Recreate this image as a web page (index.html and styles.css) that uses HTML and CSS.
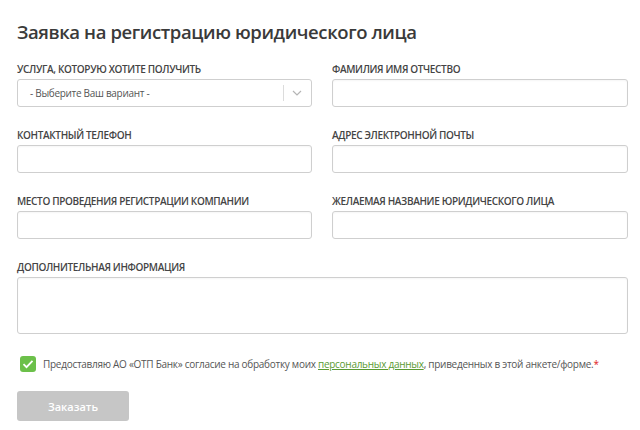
FILE: index.html
```html
<!DOCTYPE html>
<html lang="ru">
<head>
    <meta charset="UTF-8">
    <meta name="viewport" content="width=device-width, initial-scale=1.0">
    <title>Заявка на регистрацию юридического лица</title>
    <link rel="stylesheet" href="styles.css">
</head>
<body>
    <div class="page">
        <h1>Заявка на регистрацию юридического лица</h1>

        <form class="form">
            <div class="field">
                <label>Услуга, которую хотите получить</label>
                <div class="select">
                    <span class="select-text">- Выберите Ваш вариант -</span>
                    <span class="select-sep"></span>
                    <svg class="select-arrow" width="10" height="6" viewBox="0 0 10 6">
                        <path d="M1 1l4 4 4-4" fill="none" stroke="#b5b5b5" stroke-width="1.2"/>
                    </svg>
                </div>
            </div>
            <div class="field">
                <label>Фамилия имя отчество</label>
                <input class="input" type="text">
            </div>

            <div class="field">
                <label>Контактный телефон</label>
                <input class="input" type="text">
            </div>
            <div class="field">
                <label>Адрес электронной почты</label>
                <input class="input" type="text">
            </div>

            <div class="field">
                <label>Место проведения регистрации компании</label>
                <input class="input" type="text">
            </div>
            <div class="field">
                <label>Желаемая название юридического лица</label>
                <input class="input" type="text">
            </div>

            <div class="field wide">
                <label>Дополнительная информация</label>
                <textarea class="input area"></textarea>
            </div>
        </form>

        <div class="agree">
            <span class="check">
                <svg width="12" height="10" viewBox="0 0 12 10">
                    <path d="M1.5 5.2l3 3 6-6.4" fill="none" stroke="#fff" stroke-width="1.8"/>
                </svg>
            </span>
            <p>Предоставляю АО «ОТП Банк» согласие на обработку моих <a href="#">персональных данных</a>, приведенных в этой анкете/форме.<span class="req">*</span></p>
        </div>

        <button class="button" type="button">Заказать</button>
    </div>
</body>
</html>
```

FILE: styles.css
```css
body {
    margin: 0;
    font-family: "Open Sans", "Noto Sans", Arial, sans-serif;
    color: #333;
    background: #fff;
}
.page {
    padding: 18px 12px 0 17px;
}
h1 {
    margin: 0 0 16px;
    font-size: 18.5px;
    line-height: 28px;
    font-weight: 600;
    letter-spacing: -0.4px;
    color: #3a3a3a;
}
.form {
    display: grid;
    grid-template-columns: 295px 296px;
    column-gap: 20px;
    row-gap: 21px;
}
.field {
    display: flex;
    flex-direction: column;
}
.field.wide {
    grid-column: 1 / 3;
}
.field label {
    font-size: 10px;
    line-height: 14px;
    font-weight: 600;
    text-transform: uppercase;
    color: #444;
    letter-spacing: -0.35px;
    margin-bottom: 3px;
}
.input {
    box-sizing: border-box;
    height: 28px;
    margin: 0;
    border: 1px solid #cfcfcf;
    border-radius: 3px;
    background: #fff;
    box-shadow: inset 0 1px 2px rgba(0,0,0,0.04);
    font-family: inherit;
    resize: none;
}
.area {
    height: 57px;
}
.select {
    box-sizing: border-box;
    height: 28px;
    border: 1px solid #cfcfcf;
    border-radius: 3px;
    display: flex;
    align-items: center;
    padding-left: 12px;
}
.select-text {
    flex: 1;
    font-size: 10px;
    color: #555;
    letter-spacing: -0.3px;
}
.select-sep {
    width: 1px;
    height: 16px;
    background: #dcdcdc;
}
.select-arrow {
    margin: 0 9px 0 8px;
}
.agree {
    display: flex;
    align-items: center;
    margin-top: 22px;
    padding-left: 3px;
}
.check {
    width: 16px;
    height: 16px;
    border-radius: 3px;
    background: #6cc04a;
    display: flex;
    align-items: center;
    justify-content: center;
    margin-right: 7px;
}
.agree p {
    margin: 0;
    font-size: 10px;
    color: #555;
    letter-spacing: -0.28px;
}
.agree a {
    color: #5a9a32;
}
.req {
    color: #e02020;
}
.button {
    display: block;
    margin-top: 19px;
    width: 112px;
    height: 30px;
    border: 0;
    border-radius: 3px;
    background: #c6c6c6;
    color: #fff;
    font-family: inherit;
    font-size: 11px;
    font-weight: 600;
}
```
